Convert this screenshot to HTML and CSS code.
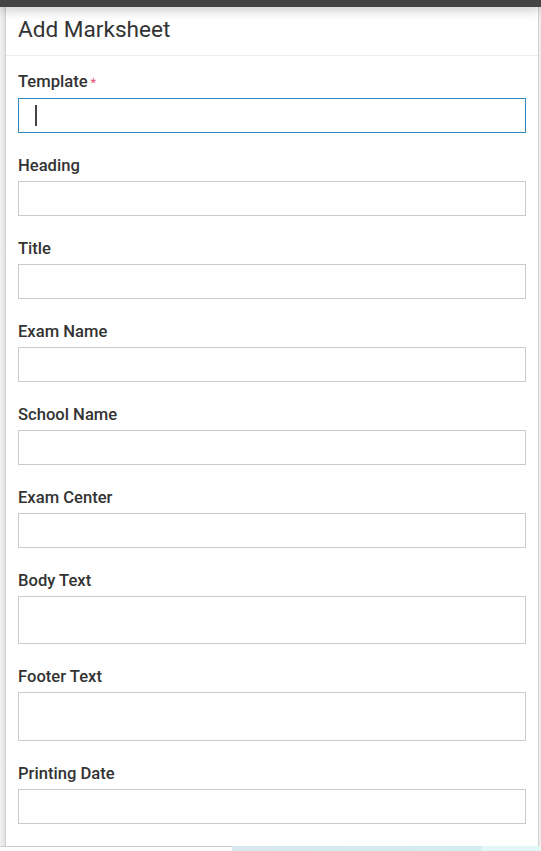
FILE: index.html
```html
<!DOCTYPE html>
<html>
<head>
<meta charset="utf-8">
<link rel="stylesheet" href="styles.css">
</head>
<body>
<div class="topbar"></div>
<div class="layout">
  <div class="gutter-left"></div>
  <div class="card">
    <div class="card-header">Add Marksheet</div>
    <div class="card-body">
      <div class="field">
        <label class="label">Template<span class="req">*</span></label>
        <div class="input focused"><span class="caret"></span></div>
      </div>
      <div class="field">
        <label class="label">Heading</label>
        <div class="input"></div>
      </div>
      <div class="field">
        <label class="label">Title</label>
        <div class="input"></div>
      </div>
      <div class="field">
        <label class="label">Exam Name</label>
        <div class="input"></div>
      </div>
      <div class="field">
        <label class="label">School Name</label>
        <div class="input"></div>
      </div>
      <div class="field">
        <label class="label">Exam Center</label>
        <div class="input"></div>
      </div>
      <div class="field">
        <label class="label">Body Text</label>
        <div class="input tall"></div>
      </div>
      <div class="field">
        <label class="label">Footer Text</label>
        <div class="input tall taller"></div>
      </div>
      <div class="field last">
        <label class="label">Printing Date</label>
        <div class="input"></div>
      </div>
    </div>
  </div>
  <div class="gutter-right"></div>
</div>
<div class="footer">
  <div class="foot-left"></div>
  <div class="foot-mid"></div>
  <div class="foot-right"></div>
</div>
</body>
</html>
```
FILE: styles.css
```css
html, body {
  margin: 0;
  padding: 0;
  background: #fff;
  font-family: Roboto, "Liberation Sans", Arial, sans-serif;
  color: #333;
  overflow: hidden;
}
.topbar {
  height: 7px;
  background: #444;
  position: relative;
  z-index: 2;
  box-shadow: 0 2px 12px rgba(0,0,0,0.3);
}
.layout {
  display: flex;
}
.gutter-left {
  width: 5px;
  background: linear-gradient(to right, #f2f2f2, #e2e2e2);
  border-right: 1px solid #d0d0d0;
}
.gutter-right {
  width: 2px;
  background: #ededed;
}
.card {
  flex: 1;
  background: #fff;
  border-right: 1px solid #d2d2d2;
}
.card-header {
  height: 48px;
  line-height: 46px;
  padding-left: 12px;
  font-size: 22.6px;
  font-weight: 400;
  color: #333;
  border-bottom: 1px solid #ececec;
}
.card-body {
  padding: 15px 12px 22px 12px;
}
.field {
  display: flex;
  flex-direction: column;
  margin-bottom: 22px;
}
.field.last {
  margin-bottom: 0;
}
.label {
  font-size: 16.6px;
  line-height: 22px;
  font-weight: 500;
  color: #333;
  margin-bottom: 4px;
}
.req {
  color: #e5527a;
  margin-left: 3px;
  font-size: 13px;
  font-weight: 400;
}
.input {
  height: 33px;
  border: 1px solid #cacaca;
  background: #fff;
  display: flex;
  align-items: center;
  padding-left: 16px;
}
.input.tall {
  height: 46px;
}
.input.taller {
  height: 47px;
}
.input.focused {
  border-color: #3189c0;
}
.caret {
  width: 2px;
  height: 21px;
  background: #444;
}
.footer {
  display: flex;
  height: 6px;
}
.foot-left {
  width: 232px;
  border-top: 1px solid #cccccc;
  background: #fff;
}
.foot-mid {
  width: 250px;
  background: linear-gradient(to right, #d7e8ee, #d2eef0);
}
.foot-right {
  flex: 1;
  background: #e3f7f6;
}
```
